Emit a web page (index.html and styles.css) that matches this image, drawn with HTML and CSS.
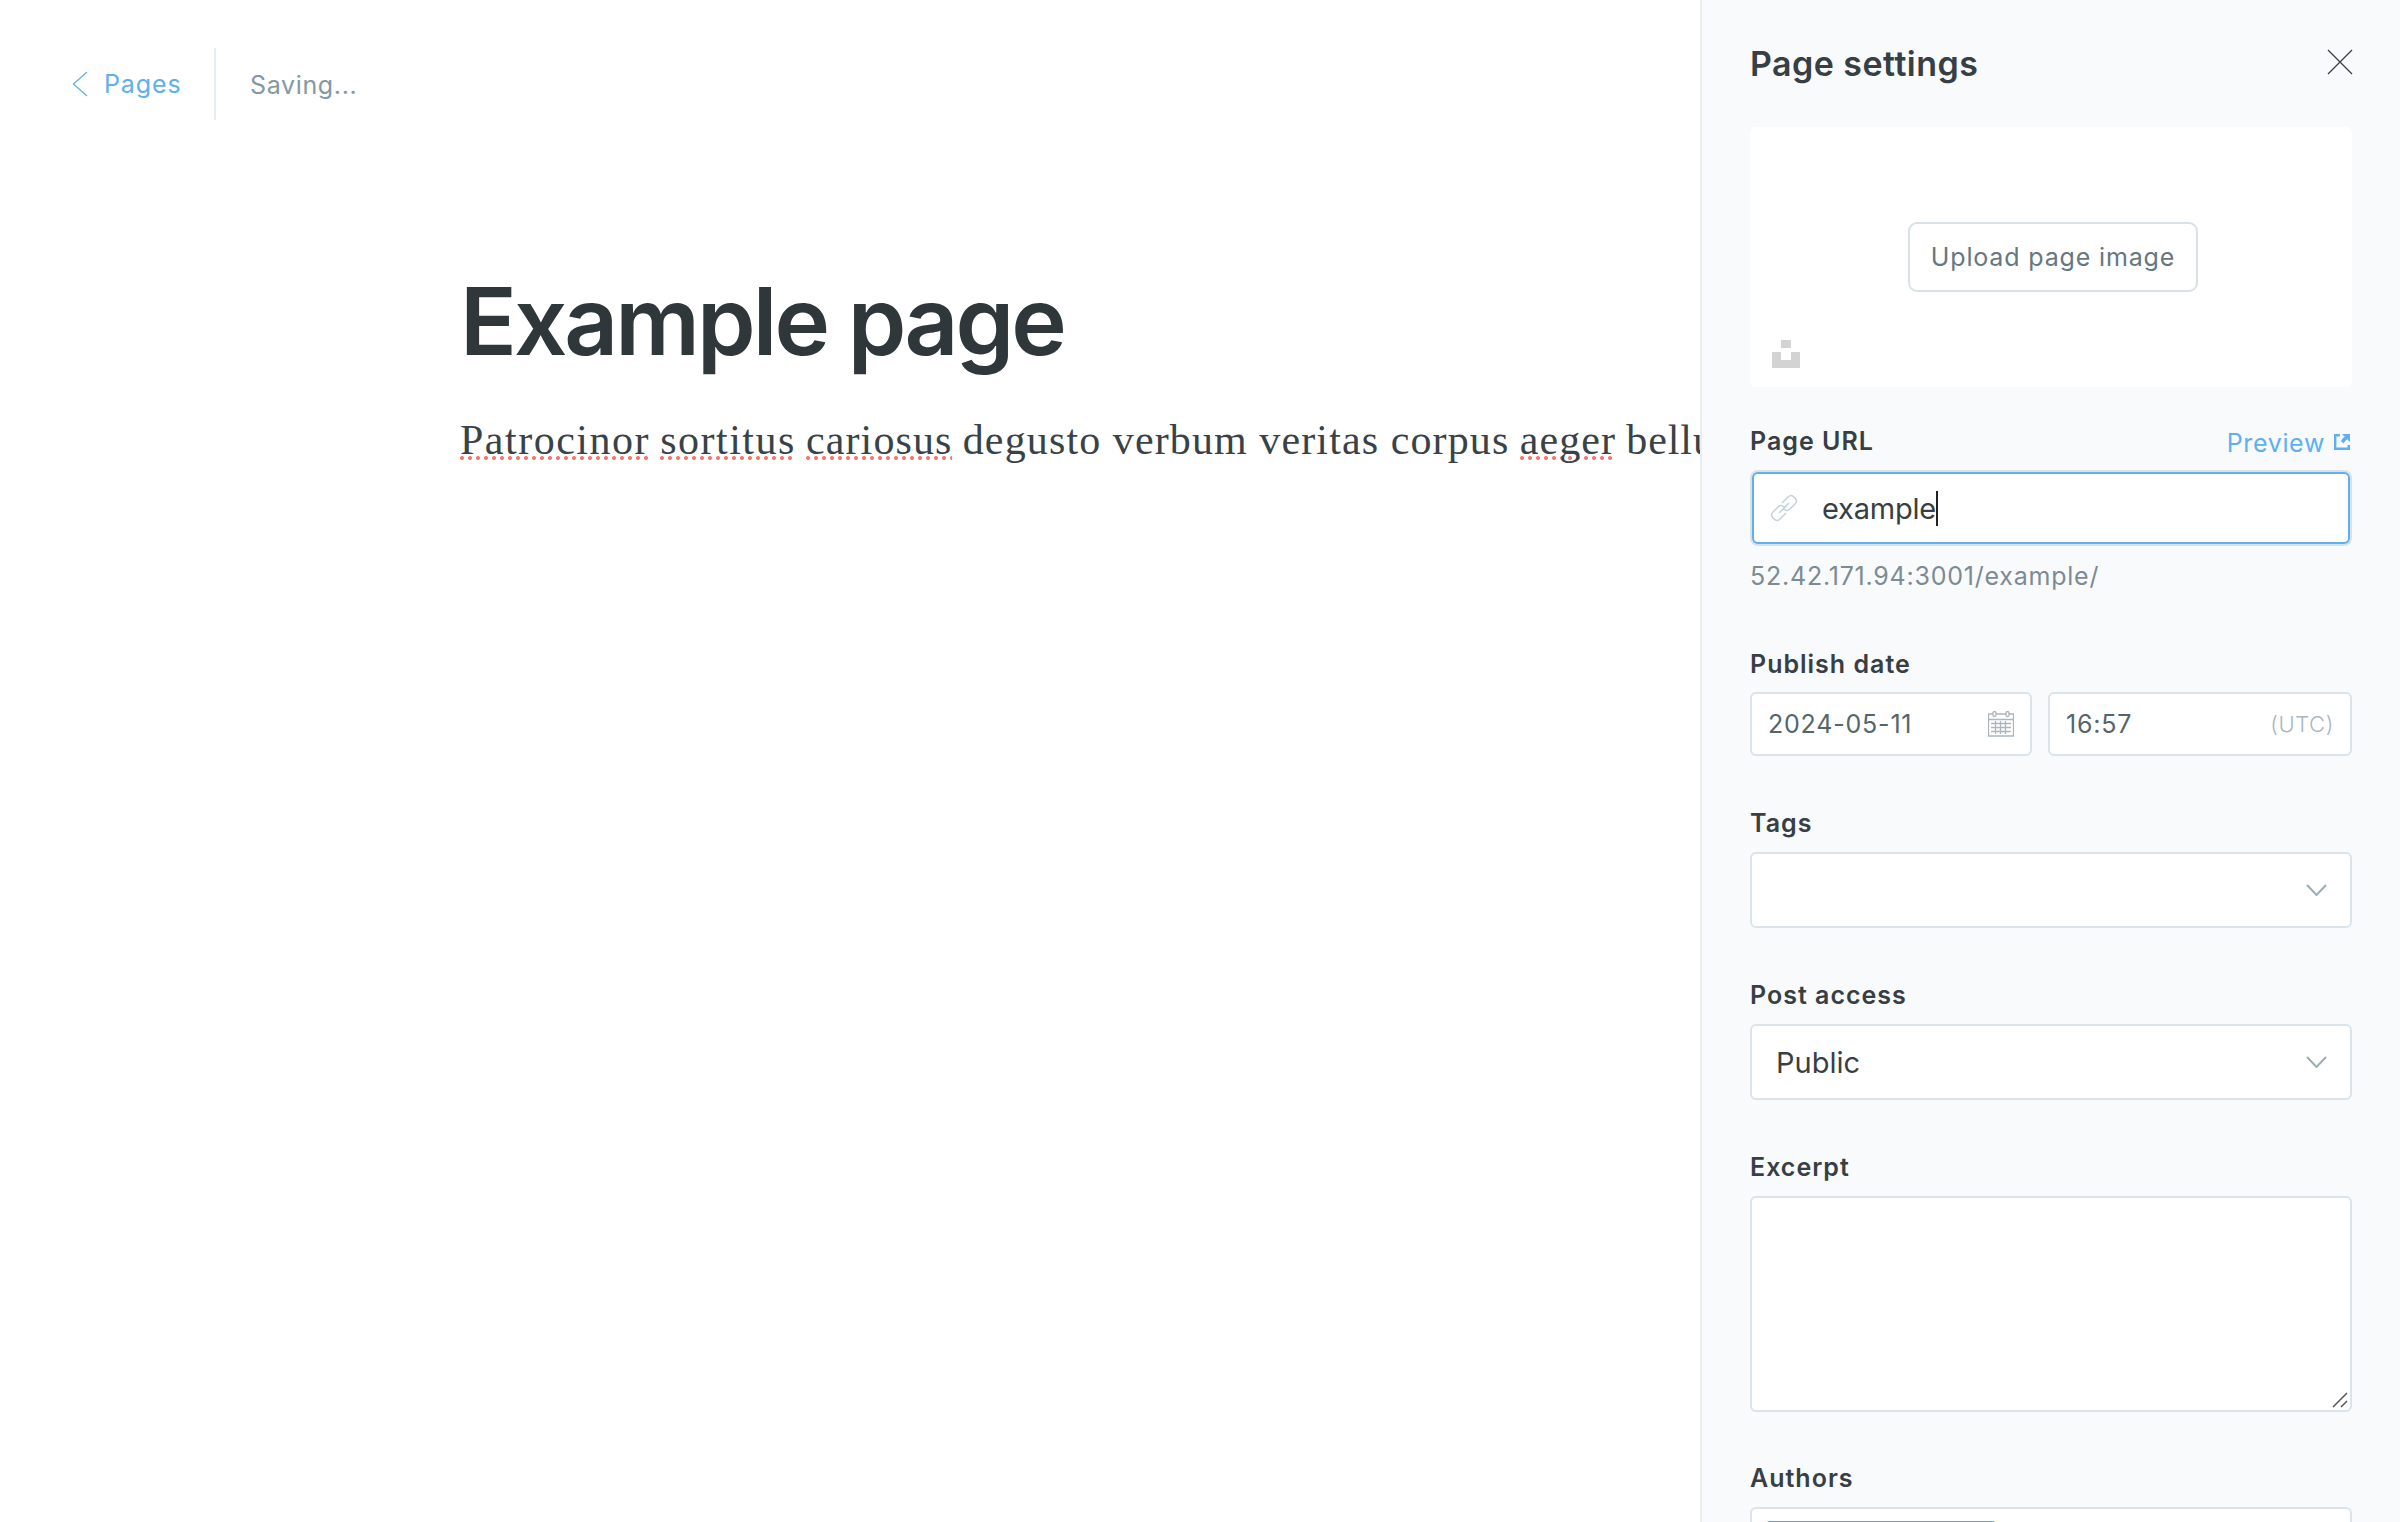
FILE: index.html
```html
<!DOCTYPE html>
<html lang="en">
<head>
<meta charset="utf-8">
<title>Page settings</title>
<link rel="stylesheet" href="styles.css">
</head>
<body>
<div class="app">
  <main class="editor">
    <header class="topbar">
      <a class="back"><svg class="back-icon" width="16" height="26" viewBox="0 0 16 26"><path d="M15 1 1.500 13 15 25"/></svg><span>Pages</span></a>
      <span class="status">Saving...</span>
    </header>
    <article class="post">
      <h1 class="title">Example page</h1>
      <p class="body"><span class="typo w1">Patrocinor</span> <span class="typo w2">sortitus</span> <span class="typo w3">cariosus</span> <span class="w4">degusto verbum veritas corpus</span> <span class="typo w5">aeger</span> <span class="w6">bellum</span></p>
    </article>
  </main>
  <aside class="settings">
    <header class="settings-head">
      <h2 class="heading">Page settings</h2>
      <svg class="close" width="26" height="26" viewBox="0 0 26 26"><path d="m2 1 24 24M26 1 2 25"/></svg>
    </header>
    <section class="uploader">
      <button class="upload">Upload page image</button>
      <svg class="unsplash" width="28" height="28" viewBox="0 0 28 28"><path d="M9 0h10v8H9zM0 12h9v8h10v-8h9v16H0z"/></svg>
    </section>
    <section class="field url">
      <div class="label-row"><label class="label">Page URL</label>
        <a class="preview"><span>Preview</span><svg width="16" height="16" viewBox="0 0 16 16"><path class="frame" d="M6 1.200H1.200v13.600h13.600V11"/><path class="arrow" d="M8 0h8v8l-2.800-2.800C11 7 10.500 7.500 10 9.500L7 7.500C7.500 5.500 9 4 10.800 2.800z"/></svg></a></div>
      <div class="input focused">
        <svg class="link" width="28" height="28" viewBox="0 0 28 28"><path d="M9 19 19 9M12 9l6-6c2-2 4-2 6 0l1 1c2 2 2 4 0 6l-5 5c-2 2-4 2-6 0M16 19l-6 6c-2 2-4 2-6 0l-1-1c-2-2-2-4 0-6l5-5c2-2 4-2 6 0"/></svg>
        <span class="slug">example</span><i class="caret"></i>
      </div>
      <p class="hint">52.42.171.94:3001/example/</p>
    </section>
    <section class="field date">
      <label class="label">Publish date</label>
      <div class="date-row">
        <div class="input small"><span>2024-05-11</span>
          <svg class="calendar" width="26" height="26" viewBox="0 0 26 26"><path d="M5 3H.5v22h25V3H21M8 3h10M.5 8.500h25M3 12.500h20M3 16.500h20M3 20.500h20M7.500 10v13M12.500 10v13M17.500 10v13"/><rect x="5" y=".5" width="3" height="5" rx="1.500"/><rect x="18" y=".5" width="3" height="5" rx="1.500"/></svg></div>
        <div class="input small"><span>16:57</span><span class="utc">(UTC)</span></div>
      </div>
    </section>
    <section class="field tags">
      <label class="label">Tags</label>
      <div class="input select"><svg class="chevron" width="21" height="12" viewBox="0 0 21 12"><path d="m1 1 9.500 10L20 1"/></svg></div>
    </section>
    <section class="field access">
      <label class="label">Post access</label>
      <div class="input select"><span>Public</span><svg class="chevron" width="21" height="12" viewBox="0 0 21 12"><path d="m1 1 9.500 10L20 1"/></svg></div>
    </section>
    <section class="field excerpt">
      <label class="label">Excerpt</label>
      <div class="input area"><svg class="grip" width="16" height="16" viewBox="0 0 16 16"><path d="M1 15 15 1M9 15l6-6"/></svg></div>
    </section>
    <section class="field authors">
      <label class="label">Authors</label>
      <div class="input tokens"><span class="token"></span></div>
    </section>
  </aside>
</div>
</body>
</html>
```
FILE: styles.css
```css
* { box-sizing: border-box; }
body { margin: 0; font-family: Inter, "Liberation Sans", sans-serif; color: #373f44; background: #fff; }
h1, h2, p { margin: 0; font-weight: inherit; white-space: nowrap; }
.app { display: flex; width: 2400px; height: 1522px; overflow: hidden; }
.app span { white-space: nowrap; }
svg { fill: none; flex: none; display: block; }

.editor { width: 1700px; flex: none; overflow: hidden; }
.topbar { display: flex; height: 72px; margin: 48px 0 0 72px; align-items: center; }
.back { display: flex; align-items: center; gap: 16px; width: 144px; height: 72px; border-right: 2px solid #e5eff5; color: #5eb0ef; font-size: 25px; line-height: 72px; letter-spacing: .9px; }
.back-icon { stroke: #5eb0ef; stroke-width: 1.3; }
.status { margin-left: 34px; padding-top: 1px; color: #8598a3; font-size: 25px; line-height: 72px; letter-spacing: .65px; }
.post { margin-left: 460px; }
.title { margin-top: 143px; height: 116px; font-size: 94px; line-height: 116px; font-weight: 600; letter-spacing: -2.95px; color: #30373b; }
.body { margin-top: 31px; height: 60px; font-family: "Liberation Serif", serif; font-size: 42px; line-height: 60px; word-spacing: -.3px; color: #394347; }
.typo { background: radial-gradient(circle at 2px 2px, #f77b72 1.7px, transparent 2.3px) 0 calc(100% - 3px) / 8px 4px repeat-x; }
.w1 { letter-spacing: 1.5px; }
.w2 { letter-spacing: 1.5px; }
.w3 { letter-spacing: 1.1px; }
.w4 { letter-spacing: 1.15px; }
.w5 { letter-spacing: 1.1px; }
.w6 { letter-spacing: .9px; }

.settings { width: 700px; flex: none; padding: 0 48px; border-left: 2px solid #e5eff5; background: #f9fafc; }
.settings-head { display: flex; justify-content: space-between; align-items: center; height: 127px; }
.heading { font-size: 34px; font-weight: 600; line-height: 44px; letter-spacing: .45px; }
.close { stroke: #394047; stroke-width: 1.3; margin-bottom: 3px; overflow: visible; }
.uploader { position: relative; display: flex; align-items: center; justify-content: center; height: 260px; border-radius: 6px; background: #fff; }
.upload { width: 290px; height: 70px; margin-left: 4px; padding: 0; border: 2px solid #d7e2e8; border-radius: 9px; background: #fff; color: #657780; font: 400 25px Inter, sans-serif; letter-spacing: .85px; white-space: nowrap; }
.unsplash { position: absolute; left: 22px; bottom: 19px; fill: #d3d3d3; }
.field { display: flex; flex-direction: column; }
.label { display: block; height: 32px; font-size: 25px; font-weight: 600; line-height: 32px; letter-spacing: 1px; white-space: nowrap; }
.input { display: flex; align-items: center; border: 2px solid #dae4ea; border-radius: 6px; background: #fff; font-size: 29px; }
.url { padding-top: 38px; height: 261px; }
.label-row { display: flex; justify-content: space-between; height: 47px; }
.preview { display: flex; align-items: center; gap: 9px; height: 36px; color: #5eb0ef; font-size: 25px; letter-spacing: .65px; }
.preview svg { margin-right: 2px; margin-bottom: 2px; }
.frame { stroke: #5eb0ef; stroke-width: 2.4; }
.arrow { fill: #5eb0ef; }
.focused { height: 72px; margin: 0 2px; padding-left: 16px; border-color: #5eb0ef; box-shadow: 0 0 0 2px #d7e2e8; }
.link { stroke: #c3d2db; stroke-width: 1.5; margin-right: 24px; }
.slug { letter-spacing: -.2px; }
.caret { width: 2px; height: 35px; background: #222; }
.hint { margin-top: 14px; height: 36px; line-height: 36px; font-size: 25px; letter-spacing: .77px; color: #7c8b94; }
.date { height: 160px; }
.date .label, .tags .label, .access .label, .excerpt .label, .authors .label { margin-bottom: 12px; }
.tags .label, .access .label, .excerpt .label, .authors .label { line-height: 30px; }
.date-row { display: grid; grid-template-columns: 282px 304px; gap: 16px; }
.small { justify-content: space-between; height: 64px; padding: 0 16px; color: #54666d; font-size: 25px; letter-spacing: .8px; }
.calendar { stroke: #aab5bc; stroke-width: 1.3; }
.utc { color: #abb7bf; font-size: 22px; font-weight: 300; letter-spacing: .6px; }
.tags, .access { height: 172px; }
.select { height: 76px; padding: 0 23px 0 24px; }
.chevron { margin-left: auto; stroke: #9baeb8; stroke-width: 2; }
.excerpt { height: 311px; }
.area { height: 216px; justify-content: flex-end; align-items: flex-end; padding: 0 2px 2px; }
.grip { stroke: #555; stroke-width: 1.5; }
.tokens { height: 76px; padding: 12px 14px; }
.token { width: 230px; height: 48px; border-radius: 4px; background: #5ba4e5; }
```
